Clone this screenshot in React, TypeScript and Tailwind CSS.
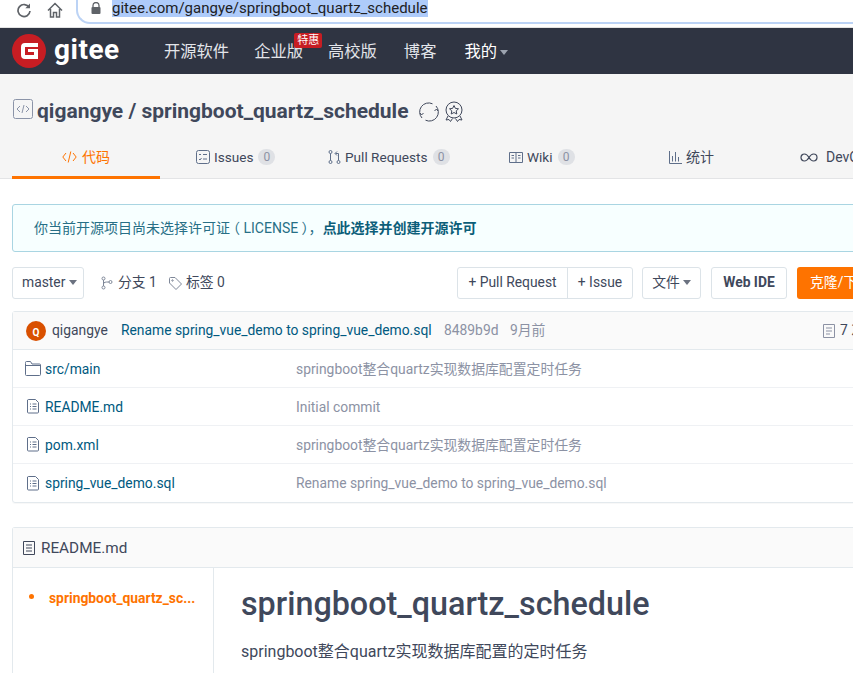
import React from "react";

const FONT = "font-['Roboto','Noto_Sans_CJK_SC',sans-serif]";

function FileIcon() {
  return (
    <svg width="12" height="15" viewBox="0 0 12 15" fill="none" stroke="#5f6f8a" strokeWidth="1" className="shrink-0">
      <path d="M1.500.5h7l3 3v9.500a1 1 0 0 1-1 1h-9a1 1 0 0 1-1-1v-12a1 1 0 0 1 1-.5z" />
      <path d="M3 5h1M5.500 5H9.500M3 7.500h1M5.500 7.500H9.500M3 10h1M5.500 10H9.500" />
    </svg>
  );
}

function FolderIcon() {
  return (
    <svg width="16" height="15" viewBox="0 0 16 15" fill="none" stroke="#5f6f8a" strokeWidth="1" className="shrink-0">
      <path d="M.5 2.500v11a1 1 0 0 0 1 1h13a1 1 0 0 0 1-1V4a1 1 0 0 0-1-1H7L5.500.5H1.500a1 1 0 0 0-1 1z" />
      <path d="M.5 4.500H15" />
    </svg>
  );
}

function Caret({ color = "#6b7280" }: { color?: string }) {
  return (
    <svg width="8" height="5" viewBox="0 0 8 5" className="shrink-0">
      <path d="M0 0h8L4 5z" fill={color} />
    </svg>
  );
}

function Badge({ n }: { n: string }) {
  return (
    <span className="ml-[1px] flex h-[16px] w-[17px] items-center justify-center rounded-full bg-[#dfe1e5] text-[12px] text-[#8c92a4]">
      {n}
    </span>
  );
}

function Tab({ w, icon, label, badge }: { w: string; icon: React.ReactNode; label: string; badge?: string }) {
  return (
    <div className={`flex h-full shrink-0 items-center gap-[4px] pb-[8px] text-[13.6px] text-[#40485b] ${w}`}>
      {icon}
      <span>{label}</span>
      {badge && <Badge n={badge} />}
    </div>
  );
}

function Row({ icon, name, msg, last }: { icon: React.ReactNode; name: string; msg: string; last?: boolean }) {
  return (
    <div className={`flex h-[38px] items-center pt-[1px] ${last ? "" : "border-b border-[#eff1f4]"}`}>
      <div className="flex w-[283px] shrink-0 items-center gap-[5px] pl-[13px] text-[13.850px] text-[#005980]">
        <span className="flex w-[14px] justify-center">{icon}</span>
        <span>{name}</span>
      </div>
      <div className="text-[13.850px] text-[#8c92a4]">{msg}</div>
    </div>
  );
}

export default function App() {
  return (
    <div className={`h-[673px] w-[853px] overflow-hidden whitespace-nowrap bg-white ${FONT}`}>
      {/* browser bar */}
      <div className="flex h-[28px] items-start border-b border-[#e3e3e3] bg-white">
        <div className="flex h-[20px] items-center pl-[16px]">
          <svg width="16" height="16" viewBox="0 0 16 16" fill="none" stroke="#5f6368" strokeWidth="1.700">
            <path d="M13.200 5.500A6 6 0 1 0 14 9" />
            <path d="M14 1.500v4.700H9.300" fill="#5f6368" stroke="none" />
          </svg>
          <svg width="16" height="16" viewBox="0 0 16 16" fill="none" stroke="#5f6368" strokeWidth="1.500" className="ml-[15px]">
            <path d="M1 8.500 8 1.500l7 7M3.500 7v8h3v-4.500h3V15h3V7" />
          </svg>
        </div>
        <div className="ml-[13px] flex h-[24px] flex-1 items-center rounded-bl-[14px] border-b-2 border-l-2 border-[#bcd3f5] pb-[6px] pl-[13px]">
          <svg width="10" height="13" viewBox="0 0 10 13" className="shrink-0">
            <path d="M2 5V3.500a3 3 0 0 1 6 0V5" fill="none" stroke="#5f6368" strokeWidth="1.300" />
            <rect x="0.500" y="5" width="9" height="7" rx="1" fill="#5f6368" />
          </svg>
          <span className="ml-[11px] bg-[#aecbfa] text-[15px] leading-[17px] text-[#202124]">gitee.com/gangye/springboot_quartz_schedule</span>
        </div>
      </div>

      {/* nav */}
      <div className="flex h-[46px] items-center bg-[#2f3442] pl-[12px]">
        <svg width="34" height="34" viewBox="0 0 34 34" className="shrink-0">
          <circle cx="17" cy="17" r="17" fill="#c71d23" />
          <path d="M9 13a4 4 0 0 1 4-4h13v4H13v8h9v-3h-6v-3h10v10H13a4 4 0 0 1-4-4z" fill="#fff" />
        </svg>
        <span className="ml-[8px] w-[66px] pb-[2px] text-[28px] font-bold leading-none tracking-[0.5px] text-white">gitee</span>
        <div className="ml-[44px] flex items-center pt-[3px] text-[16.300px] text-[#e3e5ea]">
          <span>开源软件</span>
          <span className="relative ml-[25px]">
            企业版
            <span className="absolute left-[40px] top-[-7px] rounded-[2px] bg-[#c71d23] px-[3px] text-[11px] leading-[15px] text-white">特惠</span>
          </span>
          <span className="ml-[25px]">高校版</span>
          <span className="ml-[27px]">博客</span>
          <span className="ml-[28px] flex items-center gap-[3px] text-white">
            我的
            <Caret color="#9ca3af" />
          </span>
        </div>
      </div>

      {/* repo header */}
      <div className="h-[105px] border-b border-[#e3e4e6] bg-[#f5f5f5]">
        <div className="flex h-[69px] items-center pl-[13px] pt-[7px]">
          <svg width="20" height="20" viewBox="0 0 20 20" fill="none" stroke="#8b94a8" strokeWidth="1" className="mb-[7px] shrink-0">
            <rect x="0.500" y="0.500" width="19" height="19" rx="2" />
            <path d="M7 7l-3 3 3 3M13 7l3 3-3 3M11 6l-2 8" />
          </svg>
          <span className="ml-[4px] text-[21px] font-bold text-[#40485b]">qigangye / springboot_quartz_schedule</span>
          <svg width="22" height="22" viewBox="0 0 22 22" fill="none" stroke="#40485b" strokeWidth="1" className="ml-[9px] shrink-0">
            <path d="M4 17A9 9 0 0 1 14.500 2.800M18 5a9 9 0 0 1-10.500 14.200" />
            <path d="M2 12l1.500 2L5.500 12M20 10l-1.500-2L16.500 10" />
          </svg>
          <svg width="18" height="22" viewBox="0 0 18 22" fill="none" stroke="#40485b" strokeWidth="1" className="ml-[5px] shrink-0">
            <circle cx="9" cy="9" r="8" />
            <path d="M9 4.500l1.400 2.900 3.100.4-2.300 2.100.6 3.100L9 11.500l-2.800 1.500.6-3.100L4.500 7.800l3.100-.4z" />
            <path d="M3 15l-2 4 3-.5 1.500 2 2-3M15 15l2 4-3-.5-1.500 2-2-3" />
          </svg>
        </div>
        <div className="flex h-[36px] items-center">
          <div className="ml-[12px] flex h-full w-[148px] shrink-0 items-center justify-center gap-[5px] border-b-[3px] border-[#fe7300] pb-[5px] text-[14px] text-[#fe7300]">
            <svg width="15" height="12" viewBox="0 0 15 12" fill="none" stroke="#fe7300" strokeWidth="1">
              <path d="M4 2 .8 6 4 10M11 2l3.200 4L11 10M8.800 .5 6.200 11.500" />
            </svg>
            <span>代码</span>
          </div>
          <Tab
            w="w-[150px] pl-[36px]"
            label="Issues"
            badge="0"
            icon={
              <svg width="14" height="14" viewBox="0 0 14 14" fill="none" stroke="#5f6f8a" strokeWidth="1">
                <rect x="0.500" y="0.500" width="13" height="13" rx="2" />
                <path d="M3 4.500h2M7 4.500h4M7 9h4M3 9l1 1 1.500-2" />
              </svg>
            }
          />
          <Tab
            w="w-[181px] pl-[18px]"
            label="Pull Requests"
            badge="0"
            icon={
              <svg width="13" height="14" viewBox="0 0 13 14" fill="none" stroke="#5f6f8a" strokeWidth="1">
                <circle cx="2.500" cy="2" r="1.500" />
                <circle cx="2.500" cy="12" r="1.500" />
                <circle cx="10.500" cy="12" r="1.500" />
                <path d="M2.500 3.500v7M10.500 10.500V3.500H7.500M9 1.500l-2 2 2 2" />
              </svg>
            }
          />
          <Tab
            w="w-[140px] pl-[18px]"
            label="Wiki"
            badge="0"
            icon={
              <svg width="14" height="11" viewBox="0 0 14 11" fill="none" stroke="#5f6f8a" strokeWidth="1">
                <path d="M.5.500h13v10H.5zM7 .5v10M2.500 3.500h2.500M2.500 6h2.500M9 3.500h2.500M9 6h2.500" />
              </svg>
            }
          />
          <Tab
            w="w-[131px] pl-[38px] !text-[14px]"
            label="统计"
            icon={
              <svg width="13" height="13" viewBox="0 0 13 13" fill="none" stroke="#5f6f8a" strokeWidth="1">
                <path d="M.5 0v12.500H13M3.500 5v5.500M6.500 1v9.500M9.500 6v4.500" />
              </svg>
            }
          />
          <div className="ml-[38px] flex shrink-0 items-center gap-[8px] pb-[8px] text-[14px] text-[#40485b]">
            <svg width="18" height="9" viewBox="0 0 18 9" fill="none" stroke="#40485b" strokeWidth="1.200">
              <path d="M9 4.500C7.500 2 6.500 1 4.500 1a3.500 3.500 0 0 0 0 7c2 0 3-1 4.500-3.500S11.500 1 13.500 1a3.500 3.500 0 0 1 0 7c-2 0-3-1-4.500-3.500z" />
            </svg>
            <span>DevOps</span>
          </div>
        </div>
      </div>

      {/* body */}
      <div className="pl-[12px] pt-[25px]">
        {/* banner */}
        <div className="flex h-[48px] w-[860px] items-center rounded-[3px] border border-[#a9d5e2] bg-[#f7ffff] pl-[21px] text-[14px] text-[#276f86]">
          <span>你当前开源项目尚未选择许可证</span>
          <span className="-ml-[4px]">（ LICENSE ），</span>
          <span className="font-bold text-[#0c5e79]">点此选择并创建开源许可</span>
        </div>

        {/* toolbar */}
        <div className="mt-[15px] flex h-[32px] items-center text-[13.850px] text-[#40485b]">
          <div className="flex h-full w-[72px] shrink-0 items-center gap-[4px] rounded-[3px] border border-[#dce3e8] pb-[1px] pl-[9px]">
            master
            <Caret />
          </div>
          <svg width="12" height="14" viewBox="0 0 12 14" fill="none" stroke="#7e8798" strokeWidth="1" className="ml-[17px] shrink-0">
            <circle cx="2.500" cy="2.500" r="1.500" />
            <circle cx="2.500" cy="11.500" r="1.500" />
            <circle cx="9.500" cy="6" r="1.500" />
            <path d="M2.500 4v6M2.500 8c0-2 2-2 5.500-2" />
          </svg>
          <span className="ml-[5px] w-[40px] shrink-0 pb-[1px]">分支 1</span>
          <svg width="13" height="13" viewBox="0 0 13 13" fill="none" stroke="#7e8798" strokeWidth="1" className="ml-[11px] shrink-0">
            <path d="M.5 1.500a1 1 0 0 1 1-1h4.500l6.500 6.500-5.500 5.500-6.500-6.500z" />
            <circle cx="3.500" cy="3.500" r=".7" />
          </svg>
          <span className="ml-[4px] w-[40px] shrink-0 pb-[1px]">标签 0</span>

          <div className="ml-[231px] flex h-full w-[176px] shrink-0 items-center rounded-[3px] border border-[#dce3e8]">
            <span className="flex h-full w-[110px] items-center justify-center border-r border-[#dce3e8] pb-[1px]">+ Pull Request</span>
            <span className="flex h-full flex-1 items-center justify-center pb-[1px]">+ Issue</span>
          </div>
          <div className="ml-[9px] flex h-full w-[59px] shrink-0 items-center justify-center gap-[3px] rounded-[3px] border border-[#dce3e8] pb-[1px]">
            文件
            <Caret />
          </div>
          <div className="ml-[10px] flex h-full w-[76px] shrink-0 items-center justify-center rounded-[3px] border border-[#dce3e8] pb-[1px] font-bold">
            Web IDE
          </div>
          <div className="ml-[10px] flex h-full w-[90px] shrink-0 items-center rounded-[3px] bg-[#fe7300] pb-[1px] pl-[13px] text-white">
            克隆/下载
          </div>
        </div>

        {/* file table */}
        <div className="mt-[12px] w-[860px] rounded-[3px] border border-[#e3e9ed] shadow-[0_1px_1px_rgba(0,0,0,0.03)]">
          <div className="flex h-[38px] items-center border-b border-[#e3e9ed] bg-[#fafafa] pl-[13px] text-[13.850px]">
            <span className="flex h-[20px] w-[20px] shrink-0 items-center justify-center rounded-full bg-[#d95000] pt-[3px] text-[10px] font-bold text-white">Q</span>
            <span className="ml-[6px] w-[57px] shrink-0 text-[#40485b]">qigangye</span>
            <span className="ml-[12px] w-[311px] shrink-0 text-[#005980]">Rename spring_vue_demo to spring_vue_demo.sql</span>
            <span className="ml-[12px] w-[54px] shrink-0 text-[#8c92a4]">8489b9d</span>
            <span className="ml-[12px] w-[36px] shrink-0 text-[#8c92a4]">9月前</span>
            <svg width="12" height="14" viewBox="0 0 12 14" fill="none" stroke="#8c92a4" strokeWidth="1" className="ml-[277px] shrink-0">
              <path d="M.5.500h11v13H.5zM3 4h6M3 7h6M3 10h4" />
            </svg>
            <span className="ml-[5px] text-[#40485b]">7 次提交</span>
          </div>
          <Row icon={<FolderIcon />} name="src/main" msg="springboot整合quartz实现数据库配置定时任务" />
          <Row icon={<FileIcon />} name="README.md" msg="Initial commit" />
          <Row icon={<FileIcon />} name="pom.xml" msg="springboot整合quartz实现数据库配置定时任务" />
          <Row icon={<FileIcon />} name="spring_vue_demo.sql" msg="Rename spring_vue_demo to spring_vue_demo.sql" last />
        </div>

        {/* readme */}
        <div className="mt-[24px] w-[860px] rounded-t-[3px] border border-b-0 border-[#e3e9ed]">
          <div className="flex h-[40px] items-center gap-[6px] border-b border-[#e3e9ed] bg-[#fafafa] pl-[10px] pt-[2px] text-[15.300px] text-[#40485b]">
            <svg width="12" height="15" viewBox="0 0 12 15" fill="none" stroke="#40485b" strokeWidth="1" className="shrink-0">
              <path d="M.5.500h11v13H.5zM3 4h6M3 7h6M3 10h6" />
            </svg>
            README.md
          </div>
          <div className="flex h-[200px]">
            <div className="flex w-[201px] shrink-0 items-start border-r border-[#e3e9ed] pl-[16px] pt-[21px]">
              <span className="mt-[5px] h-[5px] w-[5px] shrink-0 rounded-full bg-[#fe7300]" />
              <span className="ml-[15px] text-[13.850px] font-bold leading-[18px] text-[#fe7300]">springboot_quartz_sc...</span>
            </div>
            <div className="pl-[27px] pt-[16px] text-[#40485b]">
              <div className="text-[32.300px] font-medium leading-[40px]">springboot_quartz_schedule</div>
              <div className="mt-[17px] text-[16px] leading-[22px]">springboot整合quartz实现数据库配置的定时任务</div>
            </div>
          </div>
        </div>
      </div>
    </div>
  );
}
